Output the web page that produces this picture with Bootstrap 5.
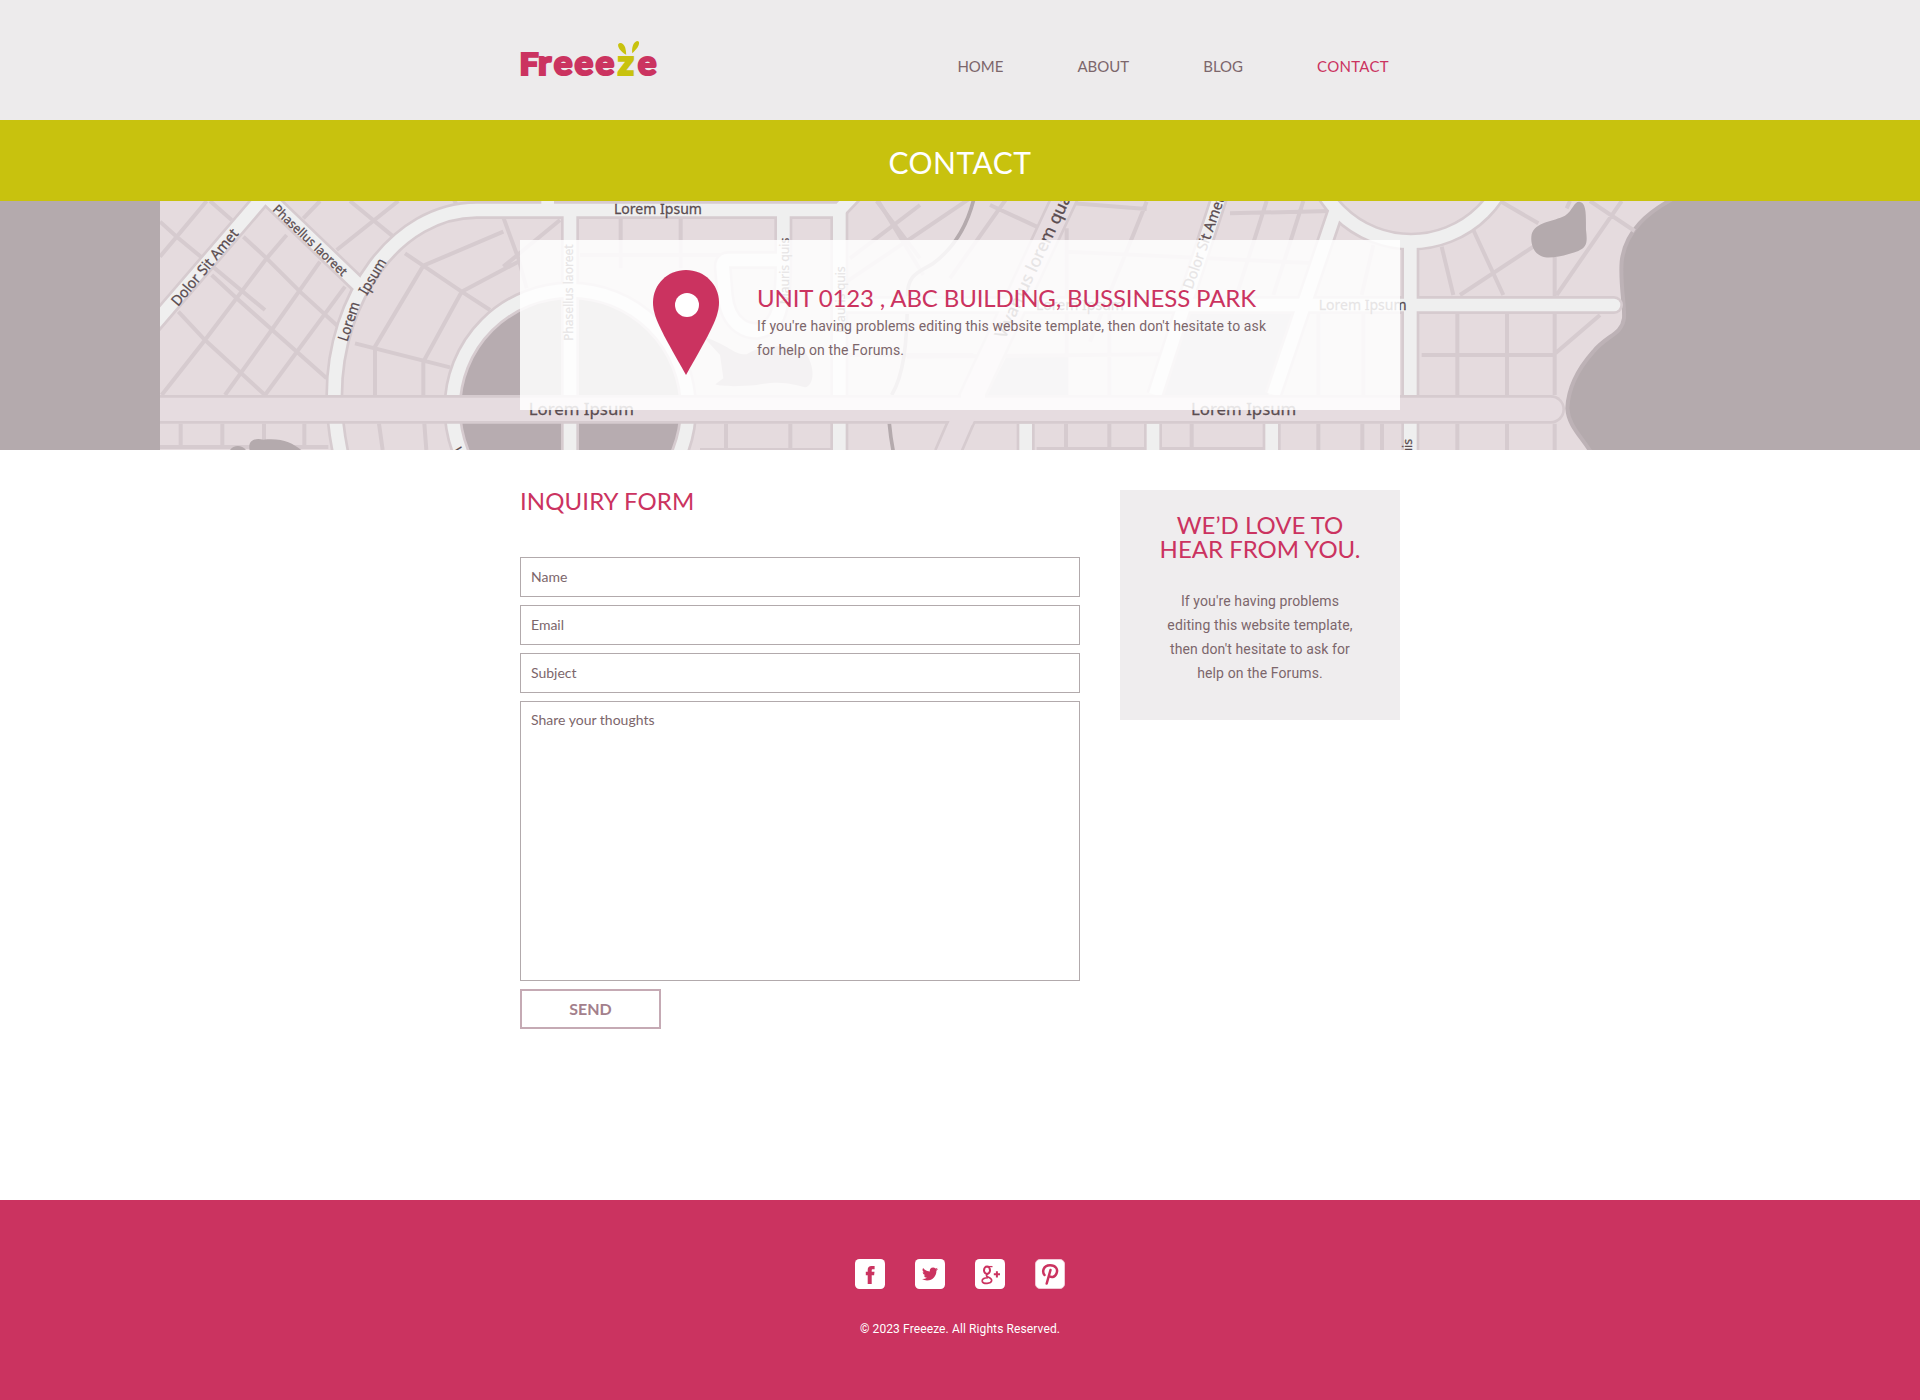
<!DOCTYPE html>
<html lang="en">
<head>
<meta charset="utf-8">
<title>Contact - Freeeze</title>
<link href="https://cdn.jsdelivr.net/npm/bootstrap@5.3.0/dist/css/bootstrap.min.css" rel="stylesheet">
<style>
  :root { --pink: #cb3360; --lime: #c8c20e; --taupe: #7c666b; }
  body { font-family: Roboto, "Liberation Sans", sans-serif; font-size: 14px; line-height: 24px; color: var(--taupe); background: #fff; letter-spacing: .11px; }
  .wrap { width: 880px; margin: 0 auto; }
  .site-head { height: 120px; background: #edebec; }
  .site-head .nav { gap: 74px; padding-right: 11px; padding-top: 11px; }
  .site-head .nav-link { padding: 0; font: 15px/24px Lato, sans-serif; color: var(--taupe); letter-spacing: 0; }
  .site-head .nav-link.active { color: var(--pink); letter-spacing: .3px; }
  .brand { margin-top: 35px; }
  .page-title { height: 81px; background: var(--lime); color: #fff; font: 30px/36px Lato, sans-serif; padding-top: 2px; letter-spacing: .5px; }
  .map-band { height: 249px; background: #b4aaad; }
  .map-art { position: absolute; inset: 0; letter-spacing: 0; }
  .map-card { position: relative; top: 39px; height: 170px; background: rgba(255,255,255,.85); padding: 30px 0 0 133px; gap: 38px; }
  .map-card .sub-title { letter-spacing: -.13px; }
  .sub-title { font: 24px/24px Lato, sans-serif; color: var(--pink); margin: 0; letter-spacing: 0; white-space: nowrap; }
  .site-main { height: 750px; padding-top: 39px; }
  .inquiry { width: 560px; }
  .inquiry-title { margin-bottom: 36px; letter-spacing: .1px; }
  .inquiry .form-control { height: 40px; border: 1px solid #b2aaac; border-radius: 0; padding: 6px 10px 8px; font: 14px/24px Lato, sans-serif; }
  .inquiry .form-control::placeholder { color: var(--taupe); opacity: 1; }
  .inquiry textarea.form-control { height: 280px; resize: none; }
  .btn-send { width: 141px; height: 40px; border: 2px solid #c5aab4; border-radius: 0; color: #a3808c; font: 700 16px/20px Lato, sans-serif; letter-spacing: 0; }
  .aside-box { width: 280px; height: 230px; margin-top: 1px; background: #efedee; padding: 23px 20px 0; }
  .aside-box .sub-title { margin-bottom: 28px; }
  .site-foot { height: 200px; background: var(--pink); color: #fff; font-size: 12px; padding-top: 59px; }
  .social { gap: 30px; }
</style>
</head>
<body>
<header class="site-head">
  <div class="wrap d-flex justify-content-between align-items-start h-100">
    <a class="brand" href="#" aria-label="Freeeze">
      <svg width="142" height="50" viewBox="518 35 142 50" class="d-block" letter-spacing="0">
        <g font-family="Lato" font-weight="900" fill="#cb3360" stroke="#cb3360" stroke-width="2.2">
          <text y="74.800" font-size="31" x="517.6" textLength="19" lengthAdjust="spacingAndGlyphs">F</text>
          <text y="74.800" font-size="35" x="536 551.8 572.6 593.4">reee</text>
          <text y="74.800" font-size="35" x="615.8" fill="#c8c20e" stroke="#c8c20e">z</text>
          <text y="74.800" font-size="35" x="635.8">e</text>
        </g>
        <path d="M624.2 54.8C618 51 615.500 47 616.200 44.200C618 41.500 622 43.500 623.200 47.500C623.900 50 624.200 52.500 624.200 54.800ZM630.300 53.300C629.600 48 631 42.500 635 41.100C638 41 637.500 44.500 635.500 47.500C634 49.800 632 51.500 630.300 53.300Z" fill="#c8c20e"/>
      </svg>
    </a>
    <nav class="nav align-self-center">
      <a class="nav-link" href="#">HOME</a>
      <a class="nav-link" href="#">ABOUT</a>
      <a class="nav-link" href="#">BLOG</a>
      <a class="nav-link active" href="#">CONTACT</a>
    </nav>
  </div>
</header>
<h1 class="page-title m-0 d-flex align-items-center justify-content-center">CONTACT</h1>

<section class="map-band position-relative overflow-hidden">
  <svg class="map-art" width="1920" height="249" viewBox="-420 18 5760 747">
    <defs><clipPath id="sheet"><rect x="60" y="18" width="5280" height="747"/></clipPath></defs>
    <g clip-path="url(#sheet)">
    <!-- land and shoreline -->
    <path d="M60 0H4620C4520 50 4455 110 4445 200C4440 270 4455 330 4452 370C4445 420 4400 420 4360 470C4320 515 4285 570 4282 640C4285 690 4320 720 4352 770H60Z" fill="#e5dbde"/>
    <path d="M4620 0C4520 50 4455 110 4445 200C4440 270 4455 330 4452 370C4445 420 4400 420 4360 470C4320 515 4285 570 4282 640C4285 690 4320 720 4352 770" fill="none" stroke="#bdb2b6" stroke-width="12"/>
    <!-- parks -->
    <path d="M2600 483H2785V600H2540Z M3110 350H3480L3385 600H3055Z" fill="#cbc1c5"/>
    <!-- minor streets -->
    <g fill="none" stroke="#d6cbcf" stroke-width="12">
      <path d="M200 18L60 185M60 80L110 125L375 345M210 18L275 75M310 125L380 190L480 290L600 400M215 240L290 310L560 550M115 350L195 435L375 600M540 18L490 70M440 120L380 190L195 435L65 600M540 200L395 405L255 600M615 275L375 600"/>
      <path d="M630 18L760 125M775 18L590 165M940 10L950 30M795 175L965 290L1050 345M1090 110L850 212L705 455V600M1135 200L965 290L850 500V600M645 445L850 497L930 517M1088 62L1135 190L1160 280M1260 75L1090 215M717 686L728 765M853 686L859 765M122 686V755M247 686V755M372 686V740M493 686V755M60 756H565"/>
      <path d="M1442 70V220M1622 70V220M1320 180H1740M1758 686V765M1951 686V765M1680 765H2100M2490 10L2120 260M2210 18L2340 190M2120 480H2500"/>
      <path d="M2210 10L2350 240M2340 30L2130 190M2600 10L2430 250M2550 30L2690 95M2790 24L3020 42M3020 20L2850 440M3380 18L3290 300M2780 170L3530 205M2780 100V480M2908 350V600M2300 485L3060 478M3270 55L3570 48M3490 18L3400 300M3700 150L3665 300M3535 350V600M3670 350V600M3905 155L3940 300M4000 105L4090 300M3960 300L4180 155M4080 18L4195 85M4350 18L4484 108M4445 18L4250 300M4244 185V600M4290 18L4280 40M3952 350V600M4101 350V600M3845 480H4240L4380 360M3952 686V765M4101 686V765M4244 686V765M2778 686V765M2908 686V765M3155 686V765M3535 686V765M3667 686V765M3726 686V765M2690 762H3390"/>
    </g>
    <!-- creek and ponds -->
    <path d="M2502 10C2480 100 2440 160 2380 205C2340 230 2300 235 2302 310C2302 450 2290 540 2255 600M2248 686Q2252 730 2260 770" fill="none" stroke="#b4aaad" stroke-width="11"/>
    <g fill="#b4aaad">
      <path d="M4318 20C4342 22 4337 70 4338 105C4343 145 4340 155 4315 168C4280 180 4245 190 4215 187C4180 180 4170 145 4175 118C4185 80 4240 80 4275 62C4300 45 4300 20 4318 20Z"/>
      <path d="M270 765C280 750 305 748 318 765ZM330 770C320 735 345 728 370 734C430 728 460 745 490 770Z"/>
      <path d="M1690 425C1770 450 1780 480 1820 478C1870 445 1950 450 1995 470C2030 520 2020 575 1995 577C1960 570 1930 555 1850 570C1800 575 1740 575 1726 568L1750 550L1740 480Z"/>
    </g>
    <circle cx="1291" cy="640" r="352" fill="#b7acb0"/>
    <!-- wide avenues: casing first, then surface -->
    <g fill="none" stroke="#d6cbcf" stroke-width="54">
      <path d="M375 0L30 402M375 0L672 285"/>
      <path d="M2160 -20L2098 45H1010C770 45 583 310 583 600C583 670 590 720 603 780M1223 0V45"/>
      <circle cx="1291" cy="640" r="354"/>
      <path d="M1290 45V780M1930 45V200M2098 45V780M1930 195H1765Q1748 195 1748 215L1755 300C1765 400 1830 408 1850 408C1905 400 1930 370 1930 200"/>
      <path d="M2098 330H4422" stroke-linecap="round"/>
      <path d="M3240 0L3045 600M3588 45L3400 600M3811 140V780M2657 686V780M3039 686V780M3395 686V780"/>
      <circle cx="3813" cy="-166" r="306"/>
    </g>
    <path d="M2778 0L2498 600L2420 780" fill="none" stroke="#d6cbcf" stroke-width="82"/>
    <path d="M2778 0L2498 600L2420 780" fill="none" stroke="#e6dce0" stroke-width="66"/>
    <g fill="none" stroke="#efefef" stroke-width="38">
      <path d="M375 0L30 402M375 0L672 285"/>
      <path d="M2160 -20L2098 45H1010C770 45 583 310 583 600C583 670 590 720 603 780M1223 0V45"/>
      <circle cx="1291" cy="640" r="354"/>
      <path d="M1290 45V780M1930 45V200M2098 45V780M1930 195H1765Q1748 195 1748 215L1755 300C1765 400 1830 408 1850 408C1905 400 1930 370 1930 200"/>
      <path d="M2098 330H4422" stroke-linecap="round"/>
      <path d="M3240 0L3045 600M3588 45L3400 600M3811 140V780M2657 686V780M3039 686V780M3395 686V780"/>
      <circle cx="3813" cy="-166" r="306"/>
    </g>
    <path d="M60 600H4232A43 43 0 0 1 4232 686H60Z" fill="#d6cbcf"/>
    <path d="M60 608H4232A35 35 0 0 1 4232 678H60Z" fill="#e6dce0"/>
    <path d="M2463 598H2535V610H2463ZM2432 670H2505L2496 690H2424Z" fill="#e6dce0"/>
    </g>
    <!-- street names -->
    <g fill="#5a4c50" stroke="#5a4c50" stroke-width=".8" font-family="'Noto Sans', sans-serif" font-size="44">
      <text transform="translate(114 336) rotate(-50)" textLength="286" lengthAdjust="spacingAndGlyphs">Dolor Sit Amet</text>
      <text transform="translate(396 46) rotate(43.500)" font-size="38" textLength="290" lengthAdjust="spacingAndGlyphs">Phasellus laoreet</text>
      <text transform="translate(622 442) rotate(-72)" textLength="122" lengthAdjust="spacingAndGlyphs">Lorem</text>
      <text transform="translate(680 303) rotate(-59)" textLength="118" lengthAdjust="spacingAndGlyphs">Ipsum</text>
      <text x="1422" y="57" textLength="264" lengthAdjust="spacingAndGlyphs">Lorem Ipsum</text>
      <text x="1166" y="660" font-size="51" textLength="316" lengthAdjust="spacingAndGlyphs">Lorem Ipsum</text>
      <text x="3153" y="660" font-size="51" textLength="316" lengthAdjust="spacingAndGlyphs">Lorem Ipsum</text>
      <text x="2688" y="346" textLength="264" lengthAdjust="spacingAndGlyphs">Lorem Ipsum</text>
      <text x="3536" y="346" textLength="264" lengthAdjust="spacingAndGlyphs">Lorem Ipsum</text>
      <text transform="translate(1298 438) rotate(-90)" font-size="38" textLength="290" lengthAdjust="spacingAndGlyphs">Phasellus laoreet</text>
      <text transform="translate(1948 328) rotate(-90)" font-size="38" textLength="200" lengthAdjust="spacingAndGlyphs">Mauris quis</text>
      <text transform="translate(2116 414) rotate(-90)" font-size="38" textLength="200" lengthAdjust="spacingAndGlyphs">Mauris quis</text>
      <text transform="translate(3815 932) rotate(-90)" font-size="38" textLength="200" lengthAdjust="spacingAndGlyphs">Mauris quis</text>
      <text transform="translate(2595 434) rotate(-65)" font-size="51" textLength="520" lengthAdjust="spacingAndGlyphs">Vivamus lorem quam</text>
      <text transform="translate(3157 285) rotate(-70.500)" textLength="290" lengthAdjust="spacingAndGlyphs">Dolor Sit Amet</text>
      <text transform="translate(938 766) rotate(58)" font-size="38">Lorem</text>
    </g>
  </svg>
  <div class="map-card wrap d-flex align-items-start">
    <svg width="66" height="105" viewBox="459 225 198 315" class="flex-shrink-0">
      <path fill-rule="evenodd" fill="#cb3360" d="M558 225C613 225 657 268 657 322C657 365 635 405 558 540C481 405 459 365 459 322C459 268 503 225 558 225Z"/>
      <circle cx="561" cy="330" r="36" fill="#fff"/>
    </svg>
    <div class="pt-2 mt-1">
      <h2 class="sub-title pt-0 mt-1">UNIT 0123 , ABC BUILDING, BUSSINESS PARK</h2>
      <p class="m-0 pt-1">If you're having problems editing this website template, then don't hesitate to ask<br>for help on the Forums.</p>
    </div>
  </div>
</section>

<main class="site-main">
  <div class="wrap d-flex justify-content-between align-items-start">
    <form class="inquiry d-flex flex-column gap-2">
      <h2 class="sub-title inquiry-title">INQUIRY FORM</h2>
      <input class="form-control" type="text" placeholder="Name">
      <input class="form-control" type="text" placeholder="Email">
      <input class="form-control" type="text" placeholder="Subject">
      <textarea class="form-control" placeholder="Share your thoughts"></textarea>
      <button class="btn btn-send p-0" type="button">SEND</button>
    </form>
    <aside class="aside-box text-center">
      <h2 class="sub-title">WE’D LOVE TO<br>HEAR FROM YOU.</h2>
      <p class="m-0">If you're having problems<br>editing this website template,<br>then don't hesitate to ask for<br>help on the Forums.</p>
    </aside>
  </div>
</main>

<footer class="site-foot text-center">
  <div class="social d-flex justify-content-center">
    <svg width="30" height="30"><rect width="30" height="30" rx="4.500" fill="#fff"/><path fill="#cb3360" d="M12.700 25V16.300H10.800V12.800H12.700V11C12.700 8.200 14 6.900 16.500 6.900H19.600V10.200H17.800C16.900 10.200 16.700 10.600 16.700 11.300V12.800H19.500L19.100 16.300H16.700V25Z"/></svg>
    <svg width="30" height="30"><rect width="30" height="30" rx="4.500" fill="#fff"/><path fill="#cb3360" transform="translate(7 7)" d="M16 3.038a6.600 6.600 0 0 1-1.885.517 3.300 3.300 0 0 0 1.443-1.816c-.634.375-1.337.648-2.085.795a3.280 3.280 0 0 0-5.594 2.992A9.320 9.320 0 0 1 1.114 2.100a3.280 3.280 0 0 0 1.016 4.382A3.300 3.300 0 0 1 .643 6.070v.041a3.283 3.283 0 0 0 2.633 3.218 3.300 3.300 0 0 1-1.482.056 3.285 3.285 0 0 0 3.067 2.280A6.590 6.590 0 0 1 0 13.026a9.300 9.300 0 0 0 5.032 1.475c6.038 0 9.340-5.002 9.340-9.340q0-.213-.009-.424A6.700 6.700 0 0 0 16 3.038"/></svg>
    <svg width="30" height="30"><rect width="30" height="30" rx="4.500" fill="#fff"/><g fill="none" stroke="#cb3360"><ellipse cx="12" cy="11.300" rx="3" ry="3.700" stroke-width="2"/><path d="M11.500 7.600H17.500" stroke-width="1.300"/><path d="M12.800 14.800C10.800 16 11.200 17.200 13 18C15.800 19.200 17 20.300 16.600 21.900C15.900 24.800 8.500 25.300 7.300 22.600C6.500 20.300 9 18.800 13 18.600" stroke-width="1.700"/><path d="M18.800 15.300H25M21.900 12.200V18.400" stroke-width="2"/></g></svg>
    <svg width="30" height="30"><rect x=".5" y=".5" width="29" height="29" rx="4.500" fill="#fff" stroke="#f0c8d5"/><g fill="none" stroke="#cb3360" stroke-width="2.500" stroke-linecap="round"><path d="M9.500 16C7 13 8 6.300 15 6.200C21 6.200 23.200 10.500 21.500 14.500C20 18.500 15.700 19 14 16.500M15.500 11L11.700 24.500"/></g></svg>
  </div>
  <p class="m-0 pt-4 mt-1">© 2023 Freeeze. All Rights Reserved.</p>
</footer>
<script src="https://cdn.jsdelivr.net/npm/bootstrap@5.3.0/dist/js/bootstrap.bundle.min.js"></script>
</body>
</html>
